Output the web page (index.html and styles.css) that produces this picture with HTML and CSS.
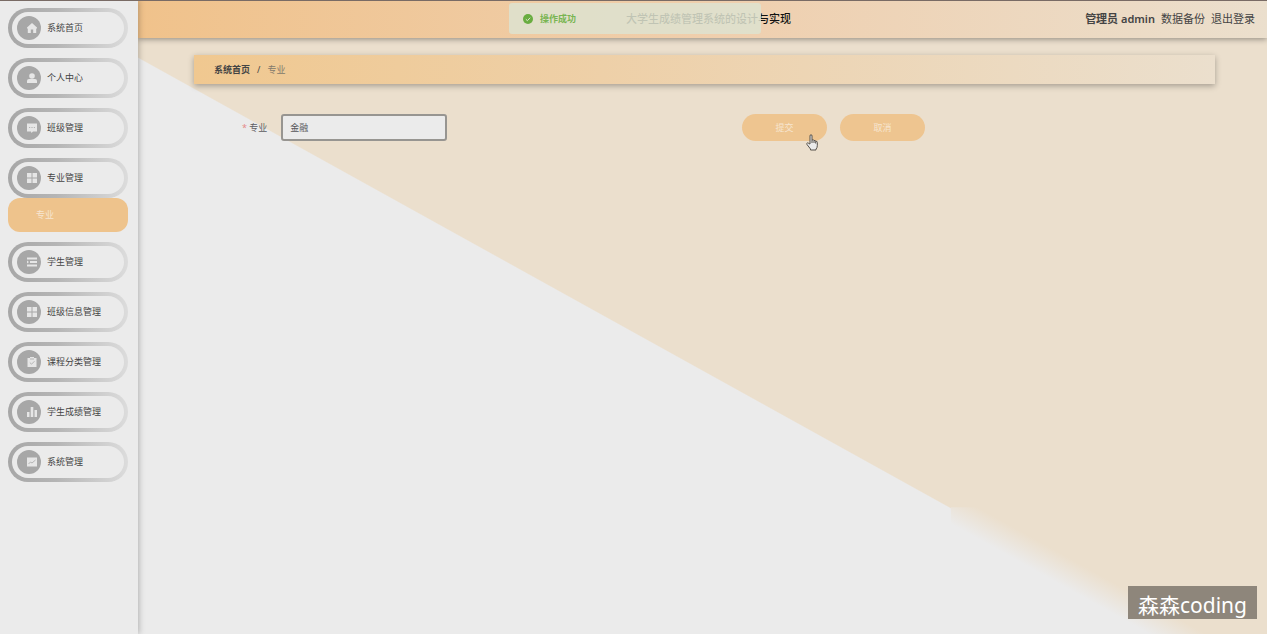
FILE: index.html
```html
<!DOCTYPE html>
<html lang="zh-CN">
<head>
<meta charset="utf-8">
<title>大学生成绩管理系统的设计与实现</title>
<link rel="stylesheet" href="styles.css">
</head>
<body>
<div class="app">
  <nav class="sidebar">
    <ul class="menu">
      <li><a class="item" href="#"><span class="dot"><svg class="icon" viewBox="0 0 10 10"><path d="M5 0L0 4.500V5.500h.8V10h3V6.500h2.400V10h3V5.500h.8v-1z"/></svg></span>系统首页</a></li>
      <li><a class="item" href="#"><span class="dot"><svg class="icon" viewBox="0 0 10 10"><circle cx="5" cy="3" r="2.8"/><path d="M0 10V8q0-2 2-2h6q2 0 2 2v2z"/></svg></span>个人中心</a></li>
      <li><a class="item" href="#"><span class="dot"><svg class="icon" viewBox="0 0 10 10"><path d="M0 .5h10v8H6L4.500 10 4 8.500H0z"/><path class="cut" d="M2 4.500h1.200M4.400 4.500h1.200M6.800 4.500H8"/></svg></span>班级管理</a></li>
      <li><a class="item" href="#"><span class="dot"><svg class="icon" viewBox="0 0 10 10"><path d="M0 0h4.500v4.500H0zM5.500 0H10v4.500H5.500zM0 5.500h4.500V10H0zM5.500 5.500H10V10H5.500z"/></svg></span>专业管理</a>
        <a class="subitem" href="#">专业</a></li>
      <li><a class="item" href="#"><span class="dot"><svg class="icon" viewBox="0 0 10 10"><path d="M0 .5h10v2H0zM3 4h7v2H3zM0 3.600l2 1.400-2 1.400zM0 7.500h10v2H0z"/></svg></span>学生管理</a></li>
      <li><a class="item" href="#"><span class="dot"><svg class="icon" viewBox="0 0 10 10"><path d="M0 0h4.500v4.500H0zM5.500 0H10v4.500H5.500zM0 5.500h4.500V10H0zM5.500 5.500H10V10H5.500z"/></svg></span>班级信息管理</a></li>
      <li><a class="item" href="#"><span class="dot"><svg class="icon" viewBox="0 0 10 10"><path d="M.5 1H3V0h4v1h2.500v9H.5z"/><path class="cut" d="M2.800 5.500l1.700 1.700 3-3M3 2h4"/></svg></span>课程分类管理</a></li>
      <li><a class="item" href="#"><span class="dot"><svg class="icon" viewBox="0 0 10 10"><path d="M0 5h2.500v5H0zM3.700 0h2.600v10H3.700zM7.500 3H10v7H7.500z"/></svg></span>学生成绩管理</a></li>
      <li><a class="item" href="#"><span class="dot"><svg class="icon" viewBox="0 0 10 10"><path d="M0 .5h10v9H0z"/><path class="cut" d="M1.500 7l2-2 1.500 1 3.500-3"/></svg></span>系统管理</a></li>
    </ul>
  </nav>
  <div class="page">
    <header class="topbar">
      <h1 class="title">大学生成绩管理系统的设计与实现</h1>
      <div class="account">
        <span class="user">管理员 admin</span>
        <a href="#">数据备份</a>
        <a href="#">退出登录</a>
      </div>
    </header>
    <main class="content">
      <div class="crumbs"><a href="#">系统首页</a><span class="slash">/</span><span class="current">专业</span></div>
      <form class="form">
        <div class="field">
          <label for="major"><span class="star">*</span> 专业</label>
          <input id="major" type="text" value="金融">
        </div>
        <div class="actions">
          <button class="btn" type="button">提交
            <svg class="hand" viewBox="0 0 12 17"><path d="M4 10V2q0-1.300 1-1.300T6 2v4q1.800-.8 2 .6 1.600-.6 1.700.7 1.600-.4 1.600 1.200v3.200q0 2-1.300 3.500V16H4.500v-1L1 10.500q-.7-1.300.4-1.600.9-.1 1.600.8zM6 6v3M8 6.600V9M9.700 7.300V9.500"/></svg>
          </button>
          <button class="btn" type="button">取消</button>
        </div>
      </form>
    </main>
  </div>
  <div class="toast" role="status"><svg class="ok" viewBox="0 0 10 10"><circle cx="5" cy="5" r="5"/><path d="M2.800 5.200l1.600 1.500 2.800-3"/></svg>操作成功</div>
  <div class="watermark">森森coding</div>
</div>
</body>
</html>
```
FILE: styles.css
```css
* { box-sizing: border-box; }
body {
  margin: 0;
  font-family: "Noto Sans", "Noto Sans CJK SC", sans-serif;
  font-size: 9px;
  line-height: 16px;
  color: #444;
}
a { color: inherit; text-decoration: none; }
.app {
  position: relative;
  display: flex;
  min-height: 100vh;
  overflow: hidden;
}
.app::before {
  content: "";
  position: absolute;
  inset: 0 0 auto;
  height: 1px;
  background: #796b65;
  z-index: 5;
}

.sidebar {
  position: relative;
  z-index: 2;
  flex: 0 0 138px;
  padding: 8px 10px 8px 8px;
  background: #ebebeb;
  box-shadow: 1px 0 6px rgba(0, 0, 0, .25);
}
.menu {
  display: flex;
  flex-direction: column;
  gap: 10px;
  margin: 0;
  padding: 0;
  list-style: none;
}
.item {
  display: flex;
  align-items: center;
  gap: 6px;
  height: 40px;
  padding-left: 5px;
  border: 4px solid transparent;
  border-radius: 20px;
  background: linear-gradient(#ebebeb, #ebebeb) padding-box,
    linear-gradient(90deg, #a7a7a7, #b5b5b5 40%, #dcdcdc) border-box;
}
.dot {
  display: flex;
  align-items: center;
  justify-content: flex-end;
  width: 24px;
  height: 24px;
  padding-right: 4px;
  border-radius: 50%;
  background: #a7a7a7;
}
.icon { width: 10px; height: 10px; fill: #e6e6e6; }
.cut { fill: none; stroke: #a7a7a7; stroke-width: .8; }
.subitem {
  display: flex;
  align-items: center;
  height: 34px;
  padding-left: 28px;
  border-radius: 12px;
  background: #eec38c;
  color: #f7e6d2;
}

.page {
  position: relative;
  flex: 1;
  min-width: 0;
  background: linear-gradient(29deg, #ebebeb 45.700%, #ebdfcd 45.800%);
}
.page::before {
  content: "";
  position: absolute;
  inset: 0;
  clip-path: inset(80% 0 0 72%);
  background: linear-gradient(29deg, #ebebeb 44.500%, #ebdfcd 47%);
}
.topbar {
  position: relative;
  display: grid;
  grid-template-columns: 1fr auto 1fr;
  align-items: center;
  height: 38px;
  padding: 0 12px 0 24px;
  background: linear-gradient(90deg, #f0c28b, #efd0b0 55%, #ebdfcd);
  box-shadow: 0 1px 6px rgba(0, 0, 0, .4);
  font-size: 11px;
}
.title {
  grid-column: 2;
  margin: 0;
  font-size: 11px;
  font-weight: 500;
  color: #111;
}
.account { display: flex; justify-content: flex-end; gap: 6px; }
.user { font-weight: 600; }

.content {
  position: relative;
  padding: 17px 52px 20px 56px;
}
.crumbs {
  display: flex;
  align-items: center;
  gap: 7px;
  height: 29px;
  padding: 0 20px;
  background: linear-gradient(90deg, #f0c890, #eed0a8 40%, #ebdfcd);
  box-shadow: 0 2px 6px rgba(0, 0, 0, .3);
}
.crumbs a { font-weight: 600; }
.current { color: #82796c; }
.form {
  display: grid;
  grid-template-columns: 494px 1fr;
  align-items: center;
  padding: 30px 0 0 48px;
}
.field { display: flex; align-items: center; gap: 14px; }
.star { color: #e58a8a; }
.field label { color: #5b5c60; white-space: nowrap; }
.field input {
  width: 166px;
  height: 27px;
  padding: 0 7px;
  border: 2px solid #979591;
  border-radius: 3px;
  background: #ebebeb;
  color: #55565a;
  font: inherit;
}
.actions { display: flex; gap: 13px; padding-left: 6px; }
.btn {
  position: relative;
  width: 85px;
  height: 27px;
  padding: 0;
  border: 0;
  border-radius: 14px;
  background: #eec590;
  color: #f7e6d0;
  font: inherit;
}
.hand {
  position: absolute;
  left: 64px;
  top: 20px;
  width: 12px;
  height: 17px;
  fill: #ebebeb;
  stroke: #55504a;
  stroke-width: 1;
}

.toast {
  position: absolute;
  z-index: 4;
  top: 3px;
  left: 509px;
  display: flex;
  align-items: center;
  gap: 7px;
  width: 252px;
  height: 31px;
  padding-left: 14px;
  border-radius: 3px;
  background: rgba(221, 226, 207, .86);
  color: #79b552;
  font-weight: 600;
}
.ok { width: 10px; height: 10px; fill: #69ad40; }
.ok path { fill: none; stroke: #dfe8d2; stroke-width: 1; }
.watermark {
  position: absolute;
  z-index: 4;
  right: 10px;
  bottom: 15px;
  padding: 6px 10px 0;
  background: #8e867b;
  color: #fff;
  font-size: 21px;
  line-height: 27px;
}
```
